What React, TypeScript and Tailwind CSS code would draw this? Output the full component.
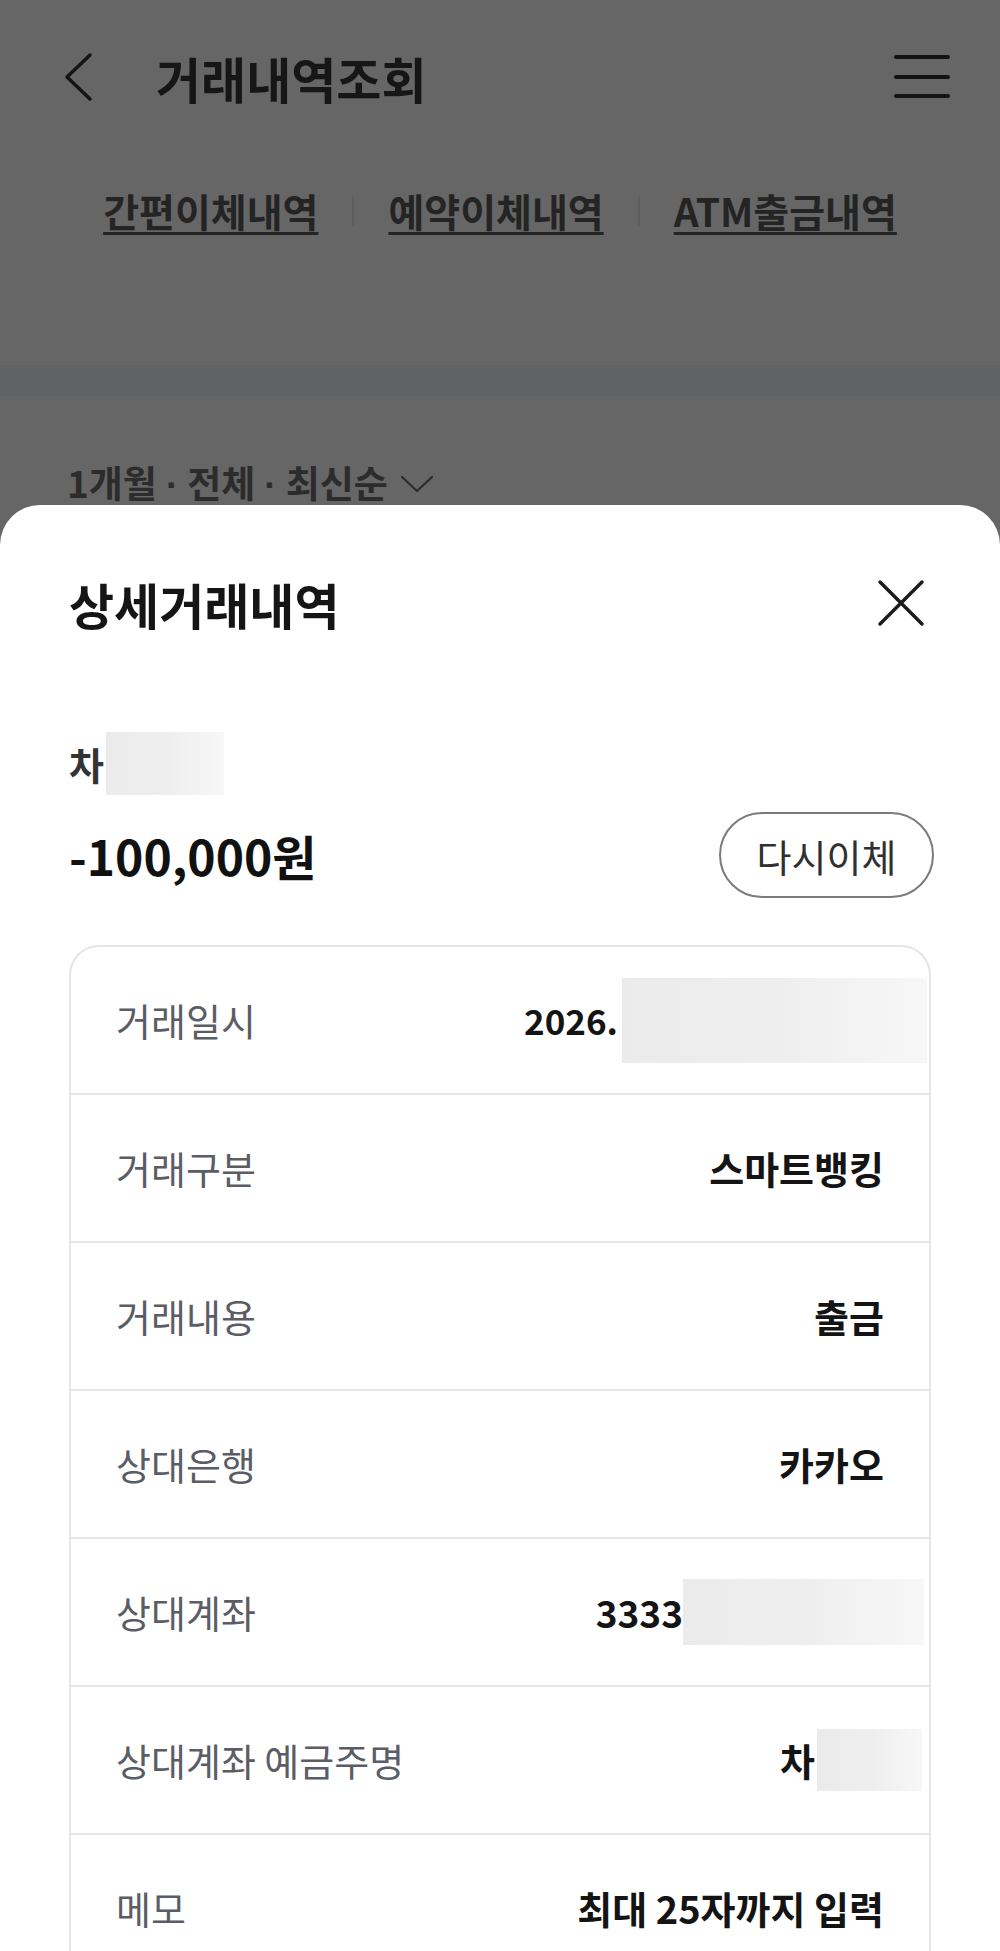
import React from 'react';

type Row = {
  label: string;
  value?: string;
  size?: string;
  blur?: { w: string; h: string; mr: string; ml?: string };
};

const rows: Row[] = [
  { label: '거래일시', value: '2026.', size: 'text-[35px]', blur: { w: 'w-[305px]', h: 'h-[85px]', mr: '-mr-[43px]', ml: 'ml-[4px]' } },
  { label: '거래구분', value: '스마트뱅킹' },
  { label: '거래내용', value: '출금' },
  { label: '상대은행', value: '카카오' },
  { label: '상대계좌', value: '3333', size: 'text-[37px]', blur: { w: 'w-[241px]', h: 'h-[66px]', mr: '-mr-[40px]' } },
  { label: '상대계좌 예금주명', value: '차', blur: { w: 'w-[105px]', h: 'h-[62px]', mr: '-mr-[38px]', ml: 'ml-[2px]' } },
  { label: '메모', value: '최대 25자까지 입력' },
];

function Blur({ className }: { className: string }) {
  return <div className={`bg-gradient-to-r from-[#ebebeb] via-[#eeeeee] to-[#f7f7f7] ${className}`} />;
}

function Dot() {
  return <span className="mx-[9px] font-['Liberation_Sans',sans-serif]">·</span>;
}

export default function App() {
  return (
    <div className="h-[1951px] w-full overflow-hidden bg-[#666666] font-['Noto_Sans_CJK_KR','Noto_Sans',sans-serif]">
      {/* dimmed page behind the sheet */}
      <div className="flex h-[505px] flex-col">
        <header className="flex h-[127px] items-center pl-[62px] pr-[50px] pt-[27px]">
          <svg width="32" height="50" viewBox="0 0 32 50" fill="none">
            <path d="M28 3 L5 25 L28 47" stroke="#141414" strokeWidth="3.5" strokeLinecap="round" strokeLinejoin="round" />
          </svg>
          <h1 className="ml-[62px] text-[49px] leading-[49px] font-bold text-[#161616]">거래내역조회</h1>
          <svg className="ml-auto" width="56" height="44" viewBox="0 0 56 44" fill="none">
            <path d="M2 2 H54 M2 22 H54 M2 41 H54" stroke="#141414" strokeWidth="4" strokeLinecap="round" />
          </svg>
        </header>

        <nav className="mt-[64px] flex items-center justify-center gap-[34px] text-[39px] leading-[39px] font-bold text-[#242424]">
          <span className="underline decoration-[3px] underline-offset-[5px]">간편이체내역</span>
          <span className="h-[30px] w-[2px] bg-[#5e5e5e]" />
          <span className="underline decoration-[3px] underline-offset-[5px]">예약이체내역</span>
          <span className="h-[30px] w-[2px] bg-[#5e5e5e]" />
          <span className="underline decoration-[3px] underline-offset-[5px]">ATM출금내역</span>
        </nav>

        <div className="mt-[135px] h-[31px] bg-[#616264]" />

        <div className="mt-[68px] flex items-center gap-[12px] pl-[67px] text-[37px] leading-[37px] font-bold text-[#2c2c2c]">
          <span>
            1개월<Dot />전체<Dot />최신순
          </span>
          <svg width="34" height="20" viewBox="0 0 34 20" fill="none">
            <path d="M2 3 L17 17 L32 3" stroke="#2c2c2c" strokeWidth="2.2" strokeLinecap="round" strokeLinejoin="round" />
          </svg>
        </div>
      </div>

      {/* bottom sheet */}
      <section className="min-h-[1446px] rounded-t-[40px] bg-white px-[69px] pt-[73px]">
        <div className="flex h-[50px] items-center justify-between">
          <h2 className="text-[49px] leading-[49px] font-bold text-[#151515]">상세거래내역</h2>
          <svg className="mr-[6px]" width="48" height="48" viewBox="0 0 48 48" fill="none">
            <path d="M3 3 L45 45 M45 3 L3 45" stroke="#1c1c1c" strokeWidth="3.5" strokeLinecap="round" />
          </svg>
        </div>

        <div className="mt-[104px] flex h-[63px] items-center">
          <span className="text-[38px] leading-[38px] font-bold text-[#333]">차</span>
          <Blur className="ml-[2px] h-[63px] w-[118px]" />
        </div>

        <div className="mt-[17px] flex items-center justify-between">
          <span className="text-[48px] leading-[48px] font-bold text-[#111]">-100,000원</span>
          <button className="-mr-[3px] flex h-[86px] w-[215px] items-center justify-center rounded-full border-2 border-[#7a7b80] text-[38px] text-[#303030]">
            다시이체
          </button>
        </div>

        <div className="mt-[47px] rounded-[30px] border-2 border-[#e4e4e9]">
          {rows.map((r) => (
            <div key={r.label} className="flex h-[148px] items-center justify-between border-b-2 border-[#e6e6eb] px-[45px]">
              <span className="text-[38px] leading-[38px] text-[#5b5d66]">{r.label}</span>
              <div className="flex items-center">
                <span className={`${r.size ?? 'text-[38px]'} leading-[38px] font-bold text-[#141414]`}>{r.value}</span>
                {r.blur && <Blur className={`${r.blur.w} ${r.blur.h} ${r.blur.mr} ${r.blur.ml ?? ''}`} />}
              </div>
            </div>
          ))}
        </div>
      </section>
    </div>
  );
}
